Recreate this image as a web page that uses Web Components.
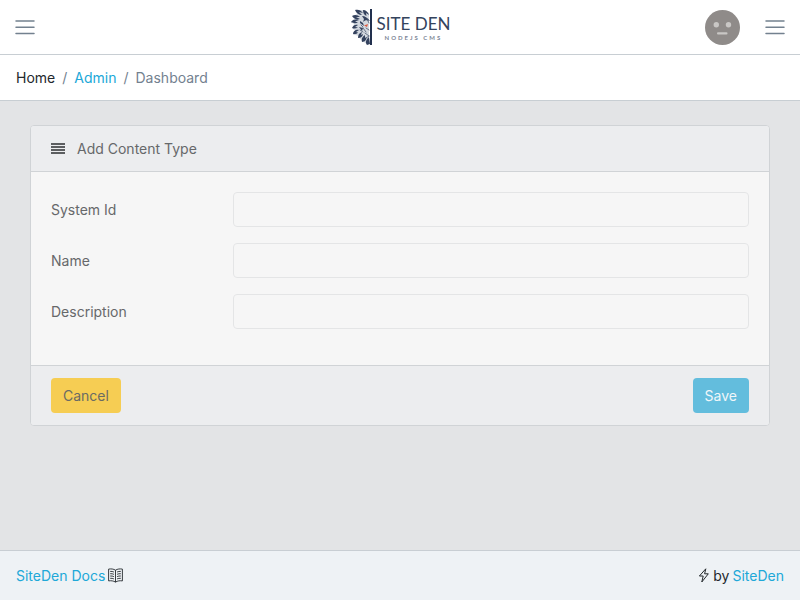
<!DOCTYPE html>
<html lang="en">
<head>
<meta charset="utf-8">
<meta name="viewport" content="width=device-width, initial-scale=1">
<title>Site Den</title>
<style>
  html, body { margin: 0; height: 100%; }
  body {
    font: 14px/21px Inter, "Liberation Sans", sans-serif;
    color: #23282c;
    background: #e3e4e6;
    --line: #c8ced3;
    --link: #20a8d8;
    --muted: #73818f;
  }
</style>
</head>
<body>
<den-app></den-app>
<script>
const define = (name, html, setup) => {
  const template = document.createElement('template');
  template.innerHTML = html;
  customElements.define(name, class extends HTMLElement {
    constructor() {
      super();
      this.attachShadow({ mode: 'open' }).append(template.content.cloneNode(true));
    }
    connectedCallback() { if (setup) setup(this, this.shadowRoot); }
  });
};

define('den-toggler', `
  <style>
    :host { display: block; }
    button { display: block; border: 0; padding: 0; background: none; cursor: pointer; }
    svg { display: block; }
  </style>
  <button type="button"><svg width="20" height="20" viewBox="0 0 20 20" fill="none" stroke="#73818f" stroke-width="1.5" stroke-linecap="round"><path d="M1 4h18M1 10.2h18M1 16.4h18"/></svg></button>
`, (el, root) => root.querySelector('button').setAttribute('aria-label', el.getAttribute('label')));

define('den-logo', `
  <style>
    :host { display: block; }
    a { display: flex; align-items: center; gap: 4px; text-decoration: none; color: #34435d; }
    svg { display: block; }
    .words { display: flex; flex-direction: column; font-family: Lato, "Liberation Sans", sans-serif; }
    .name { font-size: 17px; line-height: 21px; }
    .sub { font-size: 6px; line-height: 8px; font-weight: bold; letter-spacing: 2px; padding-left: 8px; color: #7d8696; }
  </style>
  <a href="#" aria-label="Site Den home">
    <svg width="23" height="38" viewBox="0 0 23 38" fill="none">
      <path d="M19 5L15 3l-3-1-6 1 1 3-4 2 1 3-3 3 3 2-1 5 3 2-1 4 4 1 1 3 3 1 2 3 4 1z" fill="#d3d8df"/>
      <path d="M20 1h2v36h-2z" fill="#22304e"/>
      <g fill="#34425e">
        <path d="M5 2c3-1 6 0 8 3l-4-1 3 3C9 7 6 5 5 2zM2 8c3-2 6-1 8 1L6 9l4 2c-3 1-6 0-8-3zM1 14c2-3 5-3 8-2l-4 1.500 3 1c-2 1-5 1-7-.5zM2 20c1-3 4-4 6-3l-3 2 3 .5c-2 1-4 1.500-6 .5zM3 26c0-3 3-5 6-4l-3 2 2 .5c-1 1.500-3 2-5 1.500zM13 2c3 0 5 2 6 5l-3-2 .5 3C14 7 13 5 13 2zM8 30c0-3 1-5 4-6l-1 3 2-1c0 2-2 4-5 4zM12 34c-1-3 0-5 3-7v3l1.500-1c0 2-1 5-4.500 5zM17 37c-2-3-1-5 2-8l1 7z"/>
        <path d="M12 8c3 0 6 2 8 5-3-1-5-1-7 1l1-3zM10 13l3 2 1 3-4-3zM9 19l4 1-1 3z"/>
      </g>
      <g stroke="#4a5871" stroke-width=".8" stroke-linecap="round">
        <path d="M13 20l3 4M16 20l3 2M15 25l4 3M17 11l2 4M11 17l2 2M10 22l3 2M16 30l3-2"/>
      </g>
      <path d="M14 17.500l4-1.500-1 3z" fill="#dc5b42"/>
    </svg>
    <span class="words"><span class="name">SITE DEN</span><span class="sub">NODEJS CMS</span></span>
  </a>
`);

define('den-header', `
  <style>
    :host { display: grid; grid-template-columns: 1fr auto 1fr; align-items: center; height: 54px; padding: 0 15px; background: #fff; border-bottom: 1px solid var(--line); }
    .right { display: flex; justify-content: flex-end; align-items: center; gap: 25px; }
    .avatar { display: block; }
  </style>
  <den-toggler label="Toggle menu"></den-toggler>
  <den-logo></den-logo>
  <div class="right">
    <svg class="avatar" width="35" height="35" viewBox="0 0 35 35" role="img" aria-label="User"><circle cx="17.5" cy="17.5" r="17.5" fill="#8f8b89"/><circle cx="11.3" cy="14.8" r="2.7" fill="#c9c7c5"/><circle cx="23.5" cy="14.8" r="2.7" fill="#c9c7c5"/><rect x="12" y="22.3" width="10.5" height="2.2" rx="1" fill="#c9c7c5"/></svg>
    <den-toggler label="Toggle sidebar"></den-toggler>
  </div>
`);

define('den-breadcrumb', `
  <style>
    :host { display: block; background: #fff; border-bottom: 1px solid var(--line); }
    ol { display: flex; list-style: none; margin: 0; padding: 12px 16px; gap: 7px; color: var(--muted); }
    li { display: flex; gap: 7px; }
    li + li::before { content: "/"; }
    a { color: var(--link); text-decoration: none; }
    .home { color: #23282c; }
  </style>
  <nav aria-label="Breadcrumb"><ol><li class="home">Home</li><li><a href="#">Admin</a></li><li aria-current="page">Dashboard</li></ol></nav>
`);

define('den-field', `
  <style>
    :host { display: flex; align-items: center; margin: 0 -15px; }
    label { flex: 0 0 25%; box-sizing: border-box; padding: 0 15px; }
    div { flex: 1; min-width: 0; padding: 0 15px; }
    input { display: block; width: 100%; height: 35px; box-sizing: border-box; padding: 6px 12px; border: 1px solid #e4e5e6; border-radius: 4px; background: #f6f6f6; font: inherit; color: #5c6873; }
  </style>
  <label for="field"></label><div><input id="field" type="text"></div>
`, (el, root) => { root.querySelector('label').textContent = el.getAttribute('label'); });

define('den-button', `
  <style>
    :host { display: block; }
    button { display: block; border: 0; border-radius: 4px; padding: 7px 12px; font: inherit; color: #6a6b64; background: #f6cd53; cursor: pointer; }
    :host([kind="info"]) button { color: #f0f6f9; background: #63bddd; }
  </style>
  <button type="button"><slot></slot></button>
`);

define('den-card', `
  <style>
    :host { display: block; border: 1px solid #d0d3d6; border-radius: 4px; background: #f6f6f6; color: #66686a; overflow: hidden; }
    header { display: flex; align-items: center; gap: 12px; padding: 12px 20px; background: #ecedef; border-bottom: 1px solid #d0d3d6; }
    .body { display: flex; flex-direction: column; gap: 16px; padding: 20px 20px 36px; }
    footer { display: flex; justify-content: space-between; padding: 12px 20px; background: #ecedef; border-top: 1px solid #d0d3d6; }
    svg { display: block; }
  </style>
  <header><svg width="14" height="12" viewBox="0 0 14 12" fill="#5c5e60"><path d="M0 0h14v2H0zM0 3h14v2H0zM0 6h14v2H0zM0 9h14v2H0z"/></svg><slot name="title"></slot></header>
  <div class="body"><slot></slot></div>
  <footer><slot name="actions"></slot></footer>
`);

define('den-footer', `
  <style>
    :host { display: flex; justify-content: space-between; align-items: center; height: 49px; padding: 0 16px; background: #eef2f5; border-top: 1px solid var(--line); }
    span { display: flex; align-items: center; gap: 3px; }
    a { color: var(--link); text-decoration: none; }
    svg { display: block; }
  </style>
  <span><a href="#">SiteDen Docs</a><svg width="15" height="15" viewBox="0 0 15 15" fill="none" stroke="#23282c" stroke-width="0.9"><path d="M7.5 2.2C5.5.9 3 .7.6 1.1v11.8c2.4-.4 4.9-.1 6.9 1.2 2-1.3 4.5-1.6 6.9-1.2V1.1C12 .7 9.5.9 7.5 2.2zM7.5 2.2v11.9M2.2 3.4c1.4-.1 2.6.1 3.700.6M2.200 5.700c1.400-.1 2.600.1 3.700.6M2.200 8c1.400-.1 2.600.1 3.700.6M2.200 10.300c1.400-.1 2.600.1 3.700.6M12.800 3.400c-1.400-.1-2.600.1-3.700.6M12.800 5.700c-1.400-.1-2.600.1-3.700.6M12.800 8c-1.400-.1-2.600.1-3.700.6M12.800 10.300c-1.400-.1-2.600.1-3.700.6"/></svg></span>
  <span><svg width="12" height="15" viewBox="0 0 12 15" fill="none" stroke="#23282c" stroke-linejoin="round"><path d="M7.800 .8L1.400 8h3.800l-1.400 6L10.300 5.800H6.600z"/></svg>by <a href="#">SiteDen</a></span>
`);

define('den-app', `
  <style>
    :host { display: flex; flex-direction: column; min-height: 100vh; }
    main { flex: 1; padding: 24px 30px; }
    .actions { display: flex; flex: 1; justify-content: space-between; }
  </style>
  <den-header></den-header>
  <den-breadcrumb></den-breadcrumb>
  <main>
    <den-card>
      <span slot="title">Add Content Type</span>
      <den-field label="System Id"></den-field>
      <den-field label="Name"></den-field>
      <den-field label="Description"></den-field>
      <div class="actions" slot="actions"><den-button>Cancel</den-button><den-button kind="info">Save</den-button></div>
    </den-card>
  </main>
  <den-footer></den-footer>
`);
</script>
</body>
</html>
